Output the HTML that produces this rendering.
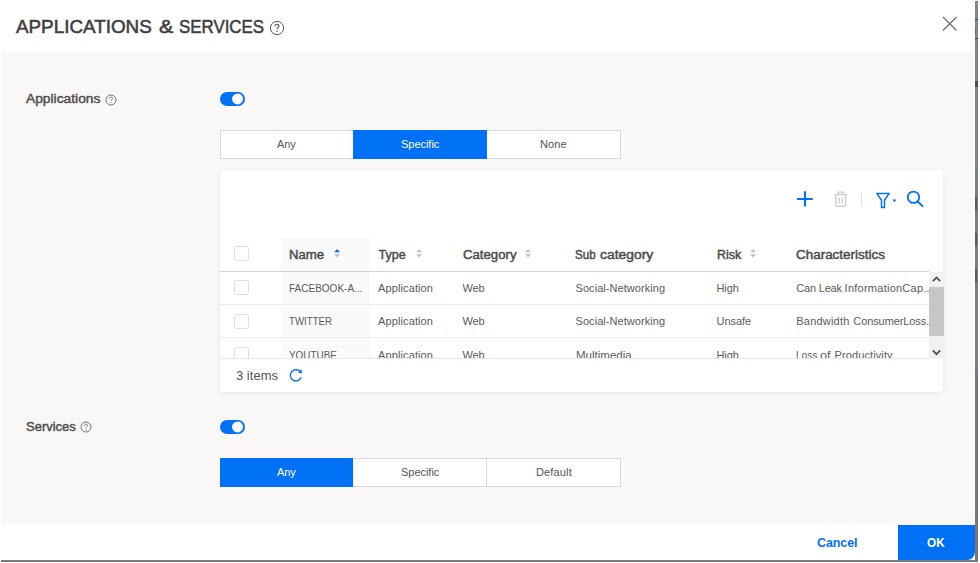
<!DOCTYPE html>
<html><head><meta charset="utf-8">
<style>
html,body{margin:0;padding:0;}
body{width:980px;height:563px;position:relative;overflow:hidden;background:#fff;font-family:"Liberation Sans",sans-serif;color:#4d4d4d;}
.abs{position:absolute;}
.t{position:absolute;white-space:nowrap;line-height:1;}
#strip{left:974.7px;top:1px;width:3.5px;height:561px;background:#858585;}
#bline{left:1px;top:560px;width:977px;height:1.8px;background:#7a7a7a;}
#panel{left:1px;top:52px;width:972px;height:473px;background:#f9f8f7;border-radius:0 6px 0 0;}
.tog{width:25px;height:14px;border-radius:7px;background:#0070f5;}
.tog i{position:absolute;left:12.5px;top:1.5px;width:11px;height:11px;border-radius:50%;background:#fff;}
.seg{height:27px;border:1px solid #d9d9d9;background:#fff;box-sizing:content-box;}
.seg.on{background:#0070f5;border-color:#0070f5;}
.cb{width:12.5px;height:12.5px;border:1px solid #dedede;border-radius:2.5px;background:#fff;}
#card{left:220px;top:170px;width:723px;height:222px;background:#fff;border-radius:4px;box-shadow:0 1px 4px rgba(0,0,0,0.08);}
.hl{position:absolute;left:0;width:709px;height:1px;background:#ececec;}
</style></head><body>
<div id="strip" class="abs"></div>
<div class="abs" style="left:974.7px;top:168px;width:3.5px;height:206px;background:#797d85;"></div>
<div class="abs" style="left:974.7px;top:374px;width:3.5px;height:188px;background:#777;"></div>
<div class="abs" style="left:974.7px;top:19px;width:3.5px;height:1px;background:#1d4f95;"></div>
<div class="abs" style="left:974.7px;top:28px;width:1.5px;height:6px;background:#3f74bd;"></div>
<div class="abs" style="left:974.7px;top:38px;width:3.5px;height:1px;background:#1d4f95;"></div>
<div class="abs" style="left:974.7px;top:81px;width:3.5px;height:6px;background:#4a4d55;"></div>
<div class="abs" style="left:974.7px;top:197px;width:2.2px;height:13px;background:#595c63;"></div>
<div class="abs" style="left:974.7px;top:233px;width:2.2px;height:13px;background:#595c63;"></div>
<div class="abs" style="left:974.7px;top:269px;width:2.2px;height:13px;background:#595c63;"></div>
<div id="bline" class="abs"></div>
<div id="panel" class="abs"></div>

<!-- title -->
<div class="t" id="t1" style="left:16.3px;top:16.6px;font-size:19px;font-weight:normal;-webkit-text-stroke:0.55px #3d3d42;color:#3d3d42;">APPLICATIONS</div>
<div class="t" id="t2" style="left:159.1px;top:16.6px;font-size:19px;font-weight:normal;-webkit-text-stroke:0.55px #3d3d42;color:#3d3d42;">&amp;</div>
<div class="t" id="t3" style="left:178.6px;top:16.6px;font-size:19px;font-weight:normal;-webkit-text-stroke:0.55px #3d3d42;color:#3d3d42;">SERVICES</div>
<svg class="abs" style="left:269px;top:19.5px" width="16" height="16" viewBox="0 0 16 16"><circle cx="8" cy="8" r="6.6" fill="none" stroke="#555" stroke-width="1"/><path d="M5.9 6.3 C5.9 4.9 6.9 4.3 8 4.3 C9.2 4.3 10 5 10 6 C10 7.4 8 7.5 8 9.3" fill="none" stroke="#555" stroke-width="1.1"/><circle cx="8" cy="11.2" r="0.75" fill="#555"/></svg>
<svg class="abs" style="left:941px;top:15px" width="18" height="18" viewBox="0 0 18 18"><path d="M2 2 L15.5 15.5 M15.5 2 L2 15.5" stroke="#6e6e6e" stroke-width="1.3" fill="none"/></svg>

<!-- Applications -->
<div class="t" id="lapp" style="left:26px;top:92px;font-size:13px;font-weight:normal;-webkit-text-stroke:0.45px #4f4f4f;color:#4f4f4f;">Applications</div>
<svg class="abs" style="left:105px;top:94px" width="12" height="12" viewBox="0 0 12 12"><circle cx="6" cy="6" r="5" fill="none" stroke="#666" stroke-width="0.9"/><path d="M4.4 4.8 C4.4 3.7 5.2 3.2 6 3.2 C6.9 3.2 7.5 3.8 7.5 4.5 C7.5 5.6 6 5.7 6 7" fill="none" stroke="#666" stroke-width="0.9"/><circle cx="6" cy="8.5" r="0.6" fill="#666"/></svg>
<svg class="abs" style="left:220px;top:92px" width="25" height="14" viewBox="0 0 25 14"><rect x="0" y="0" width="25" height="14" rx="7" fill="#0070f5"/><circle cx="17.55" cy="6.9" r="5.5" fill="#fff"/></svg>

<div class="abs seg" style="left:220px;top:130px;width:132px;"></div>
<div class="abs seg on" style="left:353px;top:130px;width:133px;"></div>
<div class="abs seg" style="left:487px;top:130px;width:132px;border-left:none;width:133px"></div>
<div class="t" id="s1" style="left:277px;top:139px;font-size:11px;color:#555;">Any</div>
<div class="t" id="s2" style="left:401px;top:139px;font-size:11px;color:#fff;">Specific</div>
<div class="t" id="s3" style="left:540px;top:139px;font-size:11px;color:#555;">None</div>

<!-- card -->
<div id="card" class="abs">
  <div class="abs" style="left:61.2px;top:67px;width:89.3px;height:122px;background:#fafafa;"></div>
  <div class="abs" style="left:0;top:101px;width:709px;height:1px;background:#d2d2d2;"></div>
  <div class="hl" style="top:134px"></div>
  <div class="hl" style="top:167px"></div>
  <div class="abs" style="left:0;top:188px;width:723px;height:1px;background:#e8e8e8;"></div>
</div>
<!-- toolbar icons -->
<svg class="abs" style="left:795px;top:189px" width="20" height="20" viewBox="0 0 20 20"><path d="M10 2.2 V17.6 M2 9.9 H17.8" stroke="#0070f5" stroke-width="2" fill="none"/></svg>
<svg class="abs" style="left:832px;top:189px" width="18" height="20" viewBox="0 0 18 20"><g fill="none" stroke="#cfcfcf" stroke-width="1.45"><path d="M2.4 5.6 H15"/><path d="M6.2 5.4 V3.2 H11.2 V5.4"/><path d="M3.8 5.8 V16 Q3.8 17.2 5 17.2 H12.4 Q13.6 17.2 13.6 16 V5.8"/><path d="M7.1 8.4 V14.4 M10.3 8.4 V14.4"/></g></svg>
<div class="abs" style="left:861px;top:192px;width:1px;height:14px;background:#dcdcdc;"></div>
<svg class="abs" style="left:874px;top:190px" width="26" height="20" viewBox="0 0 26 20"><path d="M2.8 3.4 H15.2 L10.5 10.2 V17.4 H7.5 V10.2 Z" fill="none" stroke="#0070f5" stroke-width="1.5" stroke-linejoin="round"/><path d="M18.4 9.4 H22.4 L20.4 12.3 Z" fill="#0070f5"/></svg>
<svg class="abs" style="left:905px;top:189px" width="20" height="20" viewBox="0 0 20 20"><circle cx="8.5" cy="8.25" r="5.7" fill="none" stroke="#0070f5" stroke-width="1.7"/><path d="M12.6 12.5 L17.5 17.1" stroke="#0070f5" stroke-width="1.9" stroke-linecap="round" fill="none"/></svg>

<!-- header -->
<div class="abs cb" style="left:234px;top:246.2px"></div>
<div class="t h" id="h1" style="left:289px;top:249px;">Name</div>
<div class="t h" id="h2" style="left:378.5px;top:249px;">Type</div>
<div class="t h" id="h3" style="left:462.5px;top:249px;">Category</div>
<div class="t h" id="h4a" style="left:575.3px;top:249px">Sub</div>
  <div class="t h" id="h4b" style="left:600px;top:249px">category</div>
<div class="t h" id="h5" style="left:716.5px;top:249px;">Risk</div>
<div class="t h" id="h6" style="left:796px;top:249px;">Characteristics</div>
<style>.h{font-size:12.5px;font-weight:normal;-webkit-text-stroke:0.45px #4a4a4a;color:#4a4a4a;} .c{font-size:11px;color:#5a5a5a;}</style>
<svg class="abs sort" style="left:334px;top:248px" width="7" height="11" viewBox="0 0 7 11"><path d="M0.2 4.3 L3.1 0.9 L6 4.3 Z" fill="#0070f5"/><path d="M0.2 6.2 L3.1 9.6 L6 6.2 Z" fill="#bfbfbf"/></svg>
<svg class="abs sort" style="left:415.5px;top:248px" width="7" height="11" viewBox="0 0 7 11"><path d="M0.2 4.3 L3.1 0.9 L6 4.3 Z" fill="#bfbfbf"/><path d="M0.2 6.2 L3.1 9.6 L6 6.2 Z" fill="#bfbfbf"/></svg>
<svg class="abs sort" style="left:524.5px;top:248px" width="7" height="11" viewBox="0 0 7 11"><path d="M0.2 4.3 L3.1 0.9 L6 4.3 Z" fill="#bfbfbf"/><path d="M0.2 6.2 L3.1 9.6 L6 6.2 Z" fill="#bfbfbf"/></svg>
<svg class="abs sort" style="left:749.5px;top:248px" width="7" height="11" viewBox="0 0 7 11"><path d="M0.2 4.3 L3.1 0.9 L6 4.3 Z" fill="#bfbfbf"/><path d="M0.2 6.2 L3.1 9.6 L6 6.2 Z" fill="#bfbfbf"/></svg>

<!-- rows (clipped body) -->
<div class="abs" id="tb" style="left:220px;top:272px;width:709px;height:87px;overflow:hidden;">
  <div class="abs cb" style="left:14px;top:8.3px"></div>
  <div class="abs cb" style="left:14px;top:42px"></div>
  <div class="abs cb" style="left:14px;top:75px"></div>
  <div class="t c" id="r11" style="left:69px;top:11px">FACEBOOK-A...</div>
  <div class="t c" id="r12" style="left:158px;top:11px">Application</div>
  <div class="t c" id="r13" style="left:242.5px;top:11px">Web</div>
  <div class="t c" id="r14" style="left:355.5px;top:11px">Social-Networking</div>
  <div class="t c" id="r15" style="left:496.5px;top:11px">High</div>
  <div class="t c" id="r16a" style="left:576.3px;top:11px">Can</div>
  <div class="t c" id="r16b" style="left:598.8px;top:11px">Leak</div>
  <div class="t c" id="r16c" style="left:624.6px;top:11px">InformationCap</div>
  <div class="t c" id="r16d" style="left:703.5px;top:11px">...</div>
  <div class="t c" id="r21" style="left:69px;top:44px">TWITTER</div>
  <div class="t c" id="r22" style="left:158px;top:44px">Application</div>
  <div class="t c" id="r23" style="left:242.5px;top:44px">Web</div>
  <div class="t c" id="r24" style="left:355.5px;top:44px">Social-Networking</div>
  <div class="t c" id="r25" style="left:496.5px;top:44px">Unsafe</div>
  <div class="t c" id="r26a" style="left:576.3px;top:44px">Bandwidth</div>
  <div class="t c" id="r26b" style="left:633.3px;top:44px">ConsumerLoss</div>
  <div class="t c" id="r26c" style="left:706.2px;top:44px">...</div>
  <div class="t c" id="r31" style="left:69px;top:78px">YOUTUBE</div>
  <div class="t c" id="r32" style="left:158px;top:78px">Application</div>
  <div class="t c" id="r33" style="left:242.5px;top:78px">Web</div>
  <div class="t c" id="r34" style="left:355.5px;top:78px">Multimedia</div>
  <div class="t c" id="r35" style="left:496.5px;top:78px">High</div>
  <div class="t c" id="r36a" style="left:576.3px;top:78px">Loss</div>
  <div class="t c" id="r36b" style="left:599.7px;top:78px">of</div>
  <div class="t c" id="r36c" style="left:614.6px;top:78px">Productivity</div>
</div>

<div class="abs" style="left:220px;top:358px;width:709px;height:1px;background:#e8e8e8;"></div>
<!-- scrollbar -->
<div class="abs" style="left:929px;top:272px;width:15px;height:87px;background:#f1f1f1;"></div>
<div class="abs" style="left:929px;top:287px;width:15px;height:49px;background:#c6c6c6;"></div>
<svg class="abs" style="left:929.3px;top:271.5px" width="15" height="15" viewBox="0 0 15 15"><path d="M3.8 9.2 L7.5 5.4 L11.2 9.2" fill="none" stroke="#505050" stroke-width="1.7"/></svg>
<svg class="abs" style="left:929.3px;top:345px" width="15" height="15" viewBox="0 0 15 15"><path d="M3.8 5.4 L7.5 9.2 L11.2 5.4" fill="none" stroke="#505050" stroke-width="1.7"/></svg>

<!-- card footer -->
<div class="t" id="items" style="left:236px;top:369px;font-size:13px;color:#555;">3 items</div>
<svg class="abs" style="left:287px;top:367px" width="18" height="18" viewBox="0 0 18 18"><path d="M13.6 5.2 A5.6 5.6 0 1 0 14.2 10.2" fill="none" stroke="#0a72f5" stroke-width="1.4"/><path d="M11 5.6 L14.9 6.4 L14.6 2.2 Z" fill="#0a72f5"/></svg>

<!-- Services -->
<div class="t" id="lsvc" style="left:26px;top:420px;font-size:13px;font-weight:normal;-webkit-text-stroke:0.45px #4f4f4f;color:#4f4f4f;">Services</div>
<svg class="abs" style="left:79.9px;top:421.4px" width="12" height="12" viewBox="0 0 12 12"><circle cx="6" cy="6" r="5" fill="none" stroke="#666" stroke-width="0.9"/><path d="M4.4 4.8 C4.4 3.7 5.2 3.2 6 3.2 C6.9 3.2 7.5 3.8 7.5 4.5 C7.5 5.6 6 5.7 6 7" fill="none" stroke="#666" stroke-width="0.9"/><circle cx="6" cy="8.5" r="0.6" fill="#666"/></svg>
<svg class="abs" style="left:220px;top:419.6px" width="25" height="14" viewBox="0 0 25 14"><rect x="0" y="0" width="25" height="14" rx="7" fill="#0070f5"/><circle cx="17.55" cy="6.9" r="5.5" fill="#fff"/></svg>
<div class="abs seg on" style="left:220px;top:458px;width:132px;"></div>
<div class="abs seg" style="left:353px;top:458px;width:133px;border-left:none;"></div>
<div class="abs seg" style="left:487px;top:458px;width:133px;border-left:none;"></div>
<div class="t" id="v1" style="left:277px;top:467px;font-size:11px;color:#fff;">Any</div>
<div class="t" id="v2" style="left:401px;top:467px;font-size:11px;color:#555;">Specific</div>
<div class="t" id="v3" style="left:536px;top:467px;font-size:11px;color:#555;">Default</div>

<!-- footer -->
<div class="abs" style="left:898px;top:525px;width:77px;height:35px;background:#0070f5;border-radius:0 0 8px 0;"></div>
<div class="t" id="ok" style="left:927px;top:537px;font-size:12.5px;font-weight:bold;color:#fff;">OK</div>
<div class="t" id="cancel" style="left:817px;top:537px;font-size:12.5px;font-weight:bold;color:#0070f5;">Cancel</div>
<style id="tune">
#t1{transform:scaleX(0.9912);transform-origin:0 0;}
#t2{transform:scaleX(1.1271);transform-origin:0 0;}
#t3{transform:scaleX(0.8888);transform-origin:0 0;}
#lapp{transform:scaleX(1.0612);transform-origin:0 0;}
#s1{letter-spacing:-0.090px;}
#s2{letter-spacing:-0.029px;}
#s3{letter-spacing:0.076px;}
#h1{transform:scaleX(1.0497);transform-origin:0 0;}
#h2{letter-spacing:0.048px;}
#h3{transform:scaleX(1.0545);transform-origin:0 0;}
#h4a{transform:scaleX(0.9258);transform-origin:0 0;}
#h4b{transform:scaleX(1.1094);transform-origin:0 0;}
#h5{transform:scaleX(0.9913);transform-origin:0 0;}
#h6{transform:scaleX(1.0753);transform-origin:0 0;}
#r11{transform:scaleX(0.9097);transform-origin:0 0;}
#r12{letter-spacing:0.116px;}
#r13{letter-spacing:-0.141px;}
#r14{letter-spacing:0.061px;}
#r15{letter-spacing:-0.081px;}
#r16a{letter-spacing:-0.163px;}
#r16b{letter-spacing:-0.215px;}
#r16c{letter-spacing:0.249px;}
#r21{transform:scaleX(0.8795);transform-origin:0 0;}
#r22{letter-spacing:0.116px;}
#r23{letter-spacing:-0.141px;}
#r24{letter-spacing:0.061px;}
#r25{letter-spacing:-0.060px;}
#r26a{letter-spacing:0.203px;}
#r26b{letter-spacing:-0.090px;}
#r31{transform:scaleX(0.9025);transform-origin:0 0;}
#r32{letter-spacing:0.116px;}
#r33{letter-spacing:-0.141px;}
#r34{transform:scaleX(1.0472);transform-origin:0 0;}
#r35{letter-spacing:-0.081px;}
#r36a{transform:scaleX(0.9118);transform-origin:0 0;}
#r36b{transform:scaleX(1.1537);transform-origin:0 0;}
#r36c{letter-spacing:0.103px;}
#items{letter-spacing:0.013px;}
#lsvc{transform:scaleX(0.9988);transform-origin:0 0;}
#v1{letter-spacing:-0.090px;}
#v2{letter-spacing:-0.029px;}
#v3{letter-spacing:0.149px;}
#ok{transform:scaleX(0.9387);transform-origin:0 0;}
#cancel{letter-spacing:-0.083px;}
</style>
</body></html>
